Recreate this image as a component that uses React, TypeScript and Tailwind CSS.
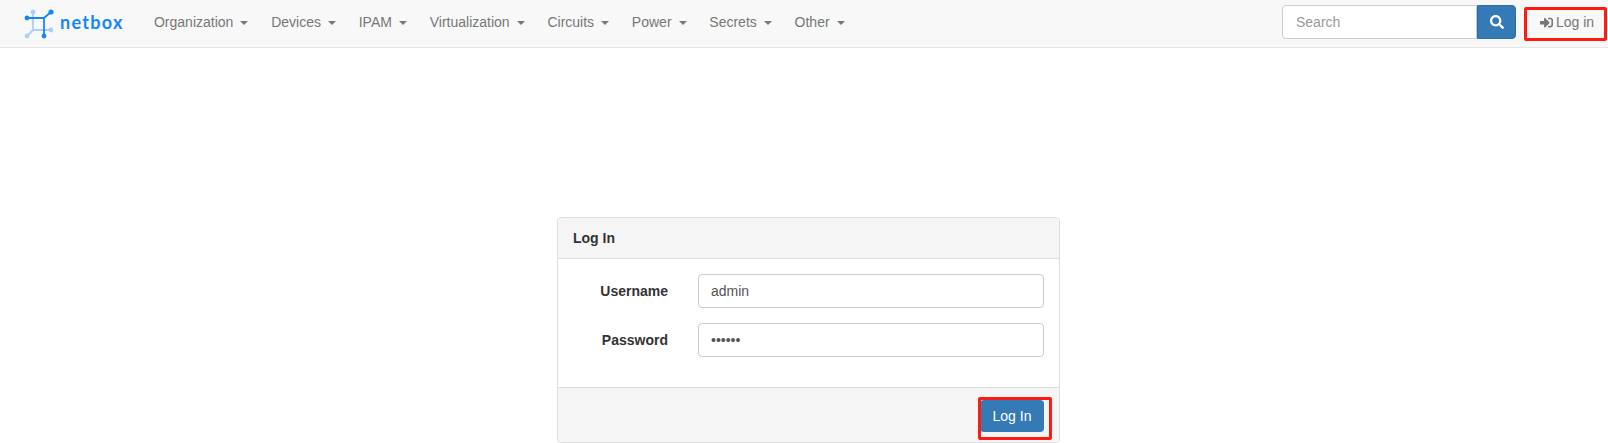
import React from 'react'
import { FaSearch, FaSignInAlt } from 'react-icons/fa'

const navItems = ['Organization', 'Devices', 'IPAM', 'Virtualization', 'Circuits', 'Power', 'Secrets', 'Other']

const Logo = () => (
  <svg width="40" height="34" viewBox="0 0 40 34" className="shrink-0">
    {/* light back square */}
    <g stroke="#a9d0fb" fill="#a9d0fb" strokeWidth="1.8">
      <path d="M9 6 V24 H27 M9 24 L3 30" fill="none" />
      <circle cx="9" cy="6" r="2.4" stroke="none" />
      <circle cx="27" cy="24" r="2.4" stroke="none" />
      <circle cx="3" cy="30" r="2.4" stroke="none" />
    </g>
    {/* dark front square */}
    <g stroke="#1685fc" fill="#1685fc" strokeWidth="1.8">
      <path d="M3 12 H20 V30 M20 12 L27 6" fill="none" />
      <circle cx="3" cy="12" r="2.4" stroke="none" />
      <circle cx="27" cy="6" r="2.6" stroke="none" />
      <circle cx="20" cy="30" r="2.4" stroke="none" />
    </g>
  </svg>
)

const Navbar = () => (
  <nav className="h-[48px] pb-[2px] bg-[#f8f8f8] border-b border-[#e7e7e7] flex items-center">
    <div className="flex items-center ml-[24px] w-[118.6px]">
      <Logo />
      <span className="ml-[-4px] text-[18px] font-bold tracking-[1.3px] text-[#1685fc] font-['Lato',sans-serif]">netbox</span>
    </div>
    <ul className="flex items-center">
      {navItems.map(item => (
        <li key={item} className="flex items-center px-[11.4px] text-[14px] text-[#777777]">
          {item}
          <span className="ml-[7px] w-0 h-0 border-x-[4px] border-x-transparent border-t-[4px] border-t-[#777777]" />
        </li>
      ))}
    </ul>
    <div className="ml-auto mr-[1px] self-start pt-[5px] flex items-start">
      <div className="flex h-[34px] w-[234px]">
        <input
          placeholder="Search"
          className="min-w-0 flex-1 bg-white border border-[#cccccc] rounded-l-[4px] px-[13px] text-[14px] text-[#555555] placeholder:text-[#999999] outline-none"
        />
        <button className="w-[39px] flex items-center justify-center bg-[#337ab7] border border-[#2e6da4] rounded-r-[4px] text-white">
          <FaSearch className="w-[14px] h-[14px]" />
        </button>
      </div>
      <a className="relative ml-[8px] mt-[2px] w-[83px] h-[34px] pl-[16px] pb-[3px] flex items-center text-[14px] text-[#777777]">
        <FaSignInAlt className="w-[13px] h-[13px] mr-[3px]" />
        Log in
        <span className="absolute inset-0 border-[3px] border-[#ff1a12] rounded-[2px]" />
      </a>
    </div>
  </nav>
)

const Field = ({ label, type, value }: { label: string; type: string; value: string }) => (
  <div className="flex items-center">
    <label className="w-[110px] text-right text-[14px] font-bold text-[#333333]">{label}</label>
    <input
      type={type}
      defaultValue={value}
      className="ml-[30px] w-[346px] h-[34px] bg-white border border-[#cccccc] rounded-[4px] px-[12px] text-[14px] text-[#555555] outline-none"
    />
  </div>
)

const LoginPanel = () => (
  <div className="w-[503px] mt-[169px] ml-[557px] bg-white border border-[#dddddd] rounded-[4px] overflow-hidden">
    <div className="h-[41px] flex items-center px-[15px] bg-[#f5f5f5] border-b border-[#dddddd] text-[14px] font-bold text-[#333333]">
      Log In
    </div>
    <div className="pt-[15px] pb-[30px] flex flex-col gap-[15px]">
      <Field label="Username" type="text" value="admin" />
      <Field label="Password" type="password" value="secret" />
    </div>
    <div className="h-[55px] flex items-start justify-end pt-[12px] pr-[15px] bg-[#f5f5f5] border-t border-[#dddddd]">
      <button className="relative w-[64px] h-[32px] bg-[#337ab7] rounded-[4px] text-[14px] text-white">
        Log In
        <span className="absolute left-[-2px] right-[-8px] top-[-3px] bottom-[-8px] border-[3px] border-[#ff1a12] rounded-[2px]" />
      </button>
    </div>
  </div>
)

export default function App() {
  return (
    <div className="h-[443px] overflow-hidden bg-white font-['Liberation_Sans',Arial,sans-serif]">
      <Navbar />
      <LoginPanel />
    </div>
  )
}
